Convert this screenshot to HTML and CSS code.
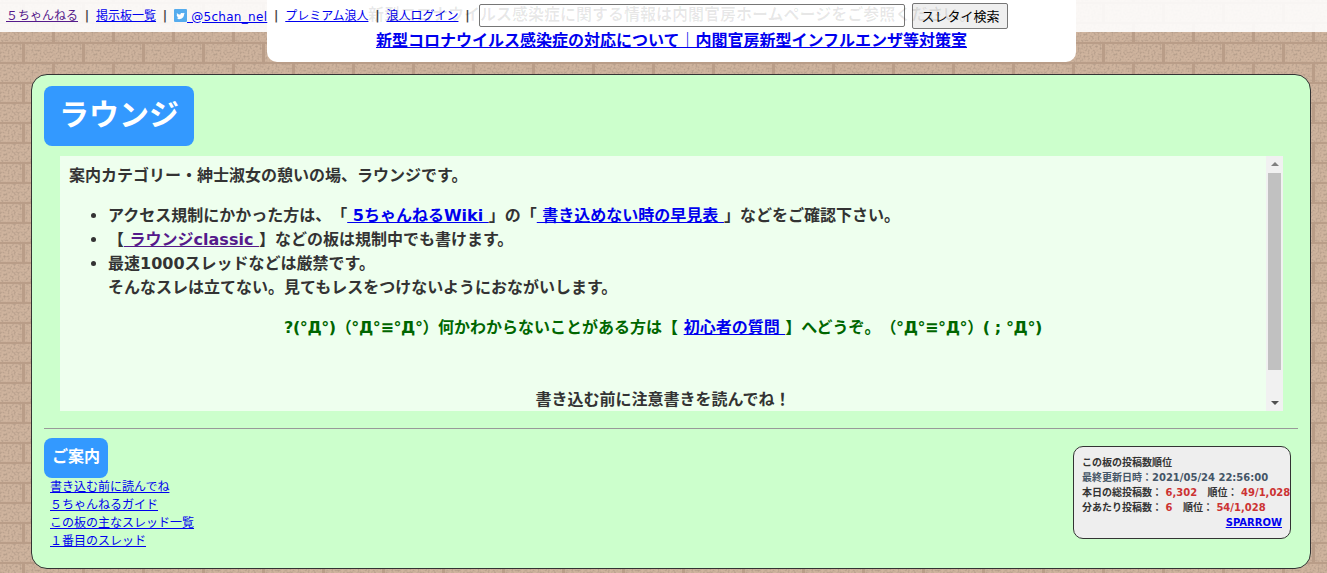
FILE: index.html
```html
<!DOCTYPE html>
<html lang="ja">
<head>
  <meta charset="UTF-8" />
  <meta name="viewport" content="width=device-width, initial-scale=1.0"/>
  <title>ラウンジ</title>
  <link rel="stylesheet" href="styles.css">
</head>
<body>

  <div class="banner">
    <a href="#">新型コロナウイルス感染症の対応について｜内閣官房新型インフルエンザ等対策室</a>
  </div>

  <nav class="topbar">
    <a href="#" class="visited">５ちゃんねる</a><span class="sep">|</span>
    <a href="#">掲示板一覧</a><span class="sep">|</span>
    <a href="#" class="twitter"><svg class="bird" viewBox="0 0 13 13" width="13" height="13"><rect width="13" height="13" rx="1" fill="#55acee"/><path d="M2.5 9.6c3.600 1.800 7.500-.3 7.600-4.300l.9-1-1.100.3-.1-.8-1 .5c-1-.9-2.700-.2-2.400 1.300C4.800 5.500 3.800 5 3 4c-.4.800-.2 1.600.4 2.100l-.7-.1c0 .8.500 1.400 1.200 1.600l-.7.1c.2.600.8 1 1.400 1-.7.600-1.400.8-2.100.9z" fill="#fff"/></svg> @5chan_nel</a><span class="sep">|</span>
    <a href="#">プレミアム浪人</a><span class="sep">|</span>
    <a href="#">浪人ログイン</a><span class="sep">|</span>
    <input type="text" class="search-box" />
    <button class="search-btn">スレタイ検索</button>
  </nav>
  <div class="ticker">新型コロナウイルス感染症に関する情報は内閣官房ホームページをご参照ください。</div>

  <div class="panel">
    <h1 class="board-title">ラウンジ</h1>

    <div class="desc">
      <div class="desc-text">
        <p class="lead">案内カテゴリー・紳士淑女の憩いの場、ラウンジです。</p>
        <ul>
          <li>アクセス規制にかかった方は、「<a href="#"> 5ちゃんねるWiki </a>」の「<a href="#"> 書き込めない時の早見表 </a>」などをご確認下さい。</li>
          <li>【<a href="#" class="visited"> ラウンジclassic </a>】などの板は規制中でも書けます。</li>
          <li>最速1000スレッドなどは厳禁です。<br>そんなスレは立てない。見てもレスをつけないようにおながいします。</li>
        </ul>
        <p class="green"><span class="kao">?(°Д°)（°Д°≡°Д°）</span>何かわからないことがある方は【 <a href="#">初心者の質問 </a>】へどうぞ。<span class="kao">（°Д°≡°Д°）( ; °Д°)</span></p>
        <p class="notice">書き込む前に注意書きを読んでね！</p>
      </div>
      <div class="scrollbar">
        <span class="arrow up"></span>
        <span class="thumb"></span>
        <span class="arrow down"></span>
      </div>
    </div>

    <hr class="rule">

    <div class="footer">
      <div class="guide">
        <h2 class="guide-title">ご案内</h2>
        <a href="#">書き込む前に読んでね</a>
        <a href="#">５ちゃんねるガイド</a>
        <a href="#">この板の主なスレッド一覧</a>
        <a href="#">１番目のスレッド</a>
      </div>
      <div class="rank">
        <div>この板の投稿数順位</div>
        <div class="updated">最終更新日時：2021/05/24 22:56:00</div>
        <div>本日の総投稿数： <span class="red">6,302</span>&nbsp;&nbsp; 順位： <span class="red">49/1,028</span></div>
        <div>分あたり投稿数： <span class="red">6</span>&nbsp;&nbsp; 順位： <span class="red">54/1,028</span></div>
        <div class="rank-link"><a href="#">SPARROW</a></div>
      </div>
    </div>
  </div>

</body>
</html>
```

FILE: styles.css
```css
html, body {
  margin: 0;
  padding: 0;
}
body {
  position: relative;
  height: 573px;
  overflow: hidden;
  font-family: 'DejaVu Sans', 'Noto Sans CJK JP', sans-serif;
  text-spacing-trim: space-all;
  color: #333;
  background-color: #cfb49e;
  background-image: url("data:image/svg+xml,%3Csvg xmlns='http://www.w3.org/2000/svg' width='60' height='40'%3E%3Cfilter id='n'%3E%3CfeTurbulence type='fractalNoise' baseFrequency='.5' numOctaves='3' stitchTiles='stitch'/%3E%3CfeColorMatrix values='0 0 0 0 .45 0 0 0 0 .33 0 0 0 0 .25 0 0 0 2.600 -1.100'/%3E%3C/filter%3E%3Crect width='60' height='40' filter='url(%23n)'/%3E%3Cg fill='%23b99d88'%3E%3Crect y='0' width='60' height='2'/%3E%3Crect y='20' width='60' height='2'/%3E%3Crect x='22' y='2' width='3' height='18'/%3E%3Crect x='52' y='22' width='3' height='18'/%3E%3C/g%3E%3C/svg%3E");
  background-size: 60px 40px;
  background-position: 0 2px;
}
a { color: #0000ee; }
a.visited { color: #551a8b; }

/* top strip */
.topbar {
  position: relative;
  display: flex;
  align-items: center;
  height: 32px;
  padding: 0 0 1px 6px;
  box-sizing: border-box;
  background: rgba(255, 255, 255, 0.9);
  font-size: 12px;
  white-space: pre;
  line-height: 1;
}
.sep {
  width: 18px;
  text-align: center;
  color: #444;
  font-size: 12px;
  font-weight: bold;
}
.twitter {
  white-space: pre;
  letter-spacing: 0.3px;
}
.bird { vertical-align: -1px; }
.search-box {
  width: 426px;
  height: 23px;
  box-sizing: border-box;
  margin: 0 0 0 3px;
  padding: 0;
  border: 1px solid #767676;
  border-radius: 2px;
  background: transparent;
}
.search-btn {
  width: 96px;
  height: 26px;
  margin-left: 7px;
  padding: 0;
  border: 1px solid #767676;
  border-radius: 2px;
  background: #efefef;
  color: #000;
  font: 13px 'Noto Sans CJK JP', sans-serif;
}
.banner {
  position: absolute;
  top: 0;
  left: 267px;
  width: 809px;
  height: 62px;
  padding-top: 31px;
  box-sizing: border-box;
  background: #fff;
  border-radius: 0 0 10px 10px;
  text-align: center;
  font-size: 16px;
  font-weight: bold;
  line-height: 20px;
}
.ticker {
  position: absolute;
  top: 3px;
  left: 368px;
  white-space: nowrap;
  color: rgba(0, 0, 0, 0.09);
  font-size: 16px;
  font-weight: bold;
  line-height: 24px;
  pointer-events: none;
}

/* main panel */
.panel {
  width: 1280px;
  height: 495px;
  box-sizing: border-box;
  margin: 42px 0 0 31px;
  padding: 11px 12px 0;
  border: 1px solid #333;
  border-radius: 16px;
  background: #ccffcc;
}
.board-title {
  display: inline-block;
  margin: 0;
  padding: 0 15px;
  height: 60px;
  line-height: 58px;
  border-radius: 8px;
  background: #3399ff;
  color: #fff;
  font-size: 30px;
  font-weight: bold;
  vertical-align: top;
}
.desc {
  display: flex;
  height: 255px;
  margin: 10px 15px 0 16px;
  background: #eeffee;
  overflow: hidden;
}
.desc-text {
  flex: 1;
  padding: 8px 9px 0;
  font-size: 16px;
  font-weight: bold;
  line-height: 24px;
}
.desc-text p { margin: 0; }
.desc-text ul {
  margin: 16px 0 0;
  padding-left: 39px;
}
.green {
  margin-top: 16px !important;
  text-align: center;
  color: #006600;
}
.kao { letter-spacing: -0.4px; }
.notice {
  margin-top: 48px !important;
  text-align: center;
}
.scrollbar {
  display: flex;
  flex-direction: column;
  align-items: center;
  width: 17px;
  background: #f1f1f1;
}
.arrow {
  width: 0;
  height: 0;
  border-left: 4px solid transparent;
  border-right: 4px solid transparent;
}
.arrow.up {
  margin: 6px 0 7px;
  border-bottom: 4px solid #808080;
}
.arrow.down {
  margin-top: auto;
  margin-bottom: 6px;
  border-top: 4px solid #505050;
}
.thumb {
  width: 13px;
  height: 197px;
  background: #c1c1c1;
}
.rule {
  height: 1px;
  margin: 17px 0 9px;
  border: none;
  background: #999;
}

/* bottom row */
.footer {
  display: flex;
  justify-content: space-between;
  align-items: flex-start;
  padding-right: 7px;
}
.guide a {
  display: block;
  width: max-content;
  margin-left: 6px;
  font-size: 12px;
  line-height: 18px;
}
.guide-title {
  width: 64px;
  height: 40px;
  box-sizing: border-box;
  margin: 0;
  border-radius: 8px;
  background: #3399ff;
  color: #fff;
  font-size: 16px;
  font-weight: bold;
  line-height: 38px;
  text-align: center;
}
.rank {
  width: 218px;
  height: 93px;
  box-sizing: border-box;
  margin-top: 8px;
  padding: 8px 0 0 8px;
  border: 1px solid #333;
  border-radius: 10px;
  background: #eeeeee;
  font-size: 10px;
  font-weight: bold;
  line-height: 15px;
  white-space: nowrap;
}
.updated { color: #456; }
.red { color: #cc3333; }
.rank-link {
  text-align: right;
  padding-right: 8px;
}
```
